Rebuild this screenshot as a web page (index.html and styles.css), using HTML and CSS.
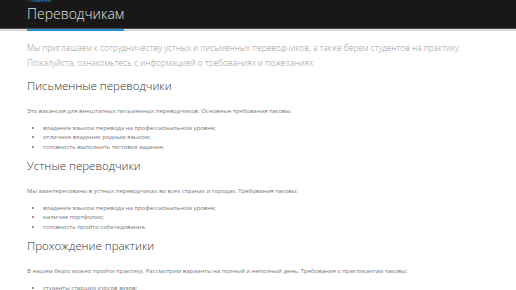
FILE: index.html
```html
<!DOCTYPE html>
<html lang="ru">
  <head>
    <meta charset="UTF-8" />
    <title>Переводчикам</title>
    <link rel="stylesheet" href="styles.css">
  </head>
  <body>
    <div class="top">
      <div class="top-inner">
        <a class="crumbs" href="#">Главная</a>
        <h1>Переводчикам</h1>
      </div>
    </div>
    <div class="content">
      <p class="lead">
        Мы приглашаем к сотрудничеству устных и письменных переводчиков, а также берем студентов на практику.<br />
        Пожалуйста, ознакомьтесь с информацией о требованиях и пожеланиях.
      </p>

      <h2>Письменные переводчики</h2>
      <p>Это вакансия для внештатных письменных переводчиков. Основные требования таковы:</p>
      <ul>
        <li>владение языком перевода на профессиональном уровне;</li>
        <li>отличное владение родным языком;</li>
        <li>готовность выполнить тестовое задание.</li>
      </ul>

      <h2>Устные переводчики</h2>
      <p>Мы заинтересованы в устных переводчиках во всех странах и городах. Требования таковы:</p>
      <ul>
        <li>владение языком перевода на профессиональном уровне;</li>
        <li>наличие портфолио;</li>
        <li>готовность пройти собеседование.</li>
      </ul>

      <h2>Прохождение практики</h2>
      <p>В нашем бюро можно пройти практику. Рассмотрим варианты на полный и неполный день. Требования к практикантам таковы:</p>
      <ul>
        <li>студенты старших курсов вузов;</li>
        <li>знание иностранного языка;</li>
        <li>желание учиться.</li>
      </ul>
    </div>
  </body>
</html>
```

FILE: styles.css
```css
html,
body {
  margin: 0;
  padding: 0;
  font-family: "Open Sans", sans-serif;
  background-color: #ffffff;
  color: #777777;
}
.top {
  background-color: #181818;
  border-bottom: 2px solid #dcdcdc;
  box-shadow: inset 0 -1px 0 #4a4a4a;
}
.top-inner {
  padding: 0 27px;
  height: 29px;
  display: flex;
  flex-direction: column;
}
.crumbs {
  font-size: 6px;
  line-height: 6px;
  margin-top: -3px;
  color: #2a8fd6;
  text-decoration: none;
}
h1 {
  margin: 0;
  margin-top: auto;
  margin-bottom: -2px;
  padding-bottom: 8px;
  align-self: flex-start;
  font-size: 14px;
  line-height: 14px;
  font-weight: 300;
  color: #e2e2e2;
  border-bottom: 2px solid #2a8fd6;
}
.content {
  padding: 0 27px;
}
.lead {
  margin: 8.5px 0 8.5px;
  font-size: 8.4px;
  line-height: 15px;
  font-weight: 300;
  color: #9a9a9a;
}
h2 {
  margin: 6px 0 0;
  font-size: 11.5px;
  line-height: 16px;
  font-weight: 300;
  color: #333333;
}
p {
  margin: 13px 0 0;
  font-size: 6px;
  line-height: 9px;
  color: #777777;
}
ul {
  margin: 7.5px 0 0;
  padding-left: 16px;
  font-size: 6px;
  line-height: 9.5px;
  color: #777777;
}
```
